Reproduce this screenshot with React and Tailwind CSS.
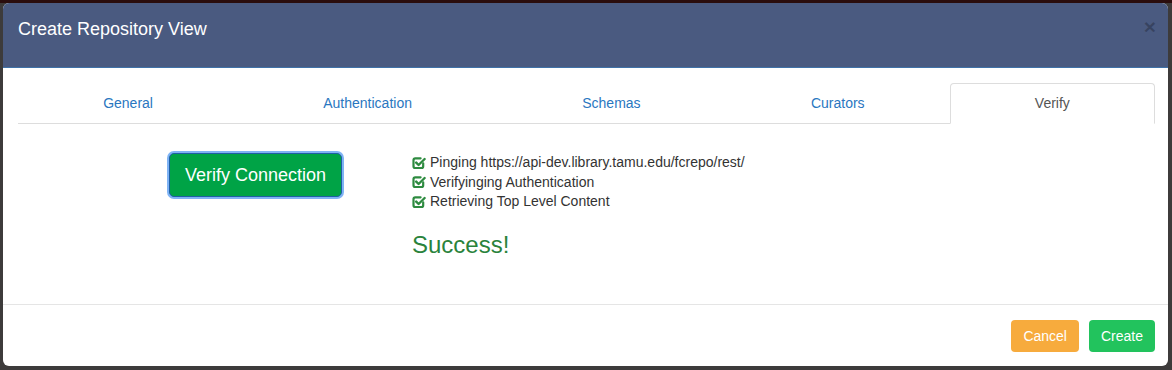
import React from "react";

function CheckSquare() {
  return (
    <svg width="14" height="14" viewBox="0 0 14 14" className="shrink-0">
      <path d="M11.2 7.3V10.2A1.8 1.8 0 0 1 9.4 12H3.3A1.8 1.8 0 0 1 1.5 10.2V4.1A1.8 1.8 0 0 1 3.3 2.3H8.6" fill="none" stroke="#2e8b40" strokeWidth="2.2" strokeLinecap="round" />
      <path d="M4.2 6.6L6.6 9L12.6 3" fill="none" stroke="#2e8b40" strokeWidth="2.4" strokeLinecap="round" strokeLinejoin="round" />
    </svg>
  );
}

export default function App() {
  const tabs = ["General", "Authentication", "Schemas", "Curators", "Verify"];
  const items = [
    "Pinging https://api-dev.library.tamu.edu/fcrepo/rest/",
    "Verifyinging Authentication",
    "Retrieving Top Level Content",
  ];
  return (
    <div
      className="w-[1172px] h-[370px] bg-[#3d3b3b] border-t-[3px] border-[#2a0d0d] pl-[3px] pr-[4px] overflow-hidden"
      style={{ fontFamily: '"Liberation Sans", Arial, sans-serif' }}
    >
      <div className="bg-white rounded-[6px] h-[363px] flex flex-col overflow-hidden">
        <div className="bg-[#4a5a80] h-[65px] border-b border-[#3f72a8] flex items-start justify-between pl-[15px] pr-[12px] pt-[16px]">
          <div className="text-white text-[18px] leading-[20px]">Create Repository View</div>
          <div className="text-black/25 text-[21px] font-bold leading-[20px] mt-[-2px]">×</div>
        </div>
        <div className="flex-1 flex flex-col pl-[15px] pr-[13px] pt-[15px]">
          <div className="flex border-b border-[#dddddd] h-[41px]">
            {tabs.map((t) => {
              const active = t === "Verify";
              return (
                <div
                  key={t}
                  className={
                    active
                      ? "flex-auto text-center text-[14px] leading-[20px] pt-[9px] pb-[11px] text-[#555555] bg-white border border-[#dddddd] border-b-transparent rounded-t-[4px] mb-[-1px]"
                      : "flex-auto text-center text-[14px] leading-[20px] pt-[9px] pb-[11px] text-[#2a77bf] border border-transparent"
                  }
                >
                  {t}
                </div>
              );
            })}
          </div>
          <div className="flex pt-[29px]">
            <div className="w-[378px] pl-[151px]">
              <button className="bg-[#00a346] text-white text-[18px] leading-[24px] px-[15px] py-[9px] rounded-[5px] border border-[#1f5fa3] shadow-[0_0_0_2px_#7fb3f5]">
                Verify Connection
              </button>
            </div>
            <div className="pl-[16px] flex flex-col">
              {items.map((it) => (
                <div key={it} className="flex items-center gap-[4px] text-[14px] leading-[19.5px] text-[#333333]">
                  <CheckSquare />
                  <span>{it}</span>
                </div>
              ))}
              <div className="text-[#2a833c] text-[24px] leading-[26px] mt-[20px]">Success!</div>
            </div>
          </div>
        </div>
        <div className="h-[62px] border-t border-[#e5e5e5] flex justify-end items-start gap-[10px] pt-[15px] pr-[13px]">
          <button className="bg-[#f7ab3d] text-white text-[14px] leading-[20px] px-[12px] py-[6px] rounded-[4px]">Cancel</button>
          <button className="bg-[#22c35d] text-white text-[14px] leading-[20px] px-[12px] py-[6px] rounded-[4px]">Create</button>
        </div>
      </div>
    </div>
  );
}
